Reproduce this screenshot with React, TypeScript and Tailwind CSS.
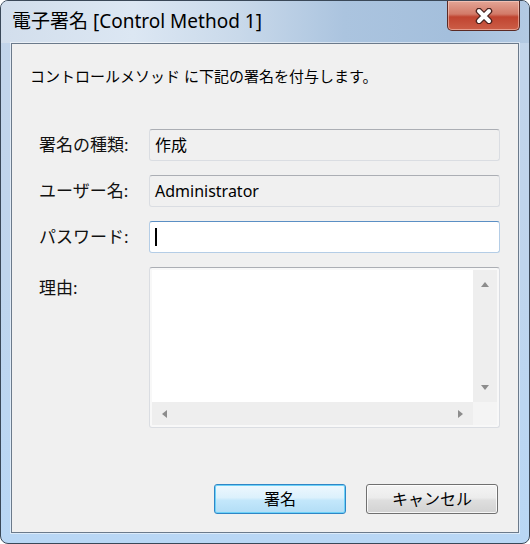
import React from "react"

const jp = "font-['Noto_Sans','Noto_Sans_CJK_JP',sans-serif]"

function CloseButton() {
  return (
    <button className="mr-[9px] flex h-[30px] w-[73px] items-center justify-center rounded-b-[5px] border border-t-0 border-[#5b2a24] bg-[linear-gradient(#e3a596_0%,#d27a68_45%,#c04430_55%,#cc5e47_100%)] shadow-[inset_0_0_0_1px_rgba(255,220,210,0.5)]">
      <svg width="22" height="16" viewBox="0 0 22 16">
        <path d="M6 3 L16 13 M16 3 L6 13" stroke="#4a2420" strokeWidth="6.5" strokeLinecap="round" />
        <path d="M6 3 L16 13 M16 3 L6 13" stroke="#ffffff" strokeWidth="4" strokeLinecap="round" />
      </svg>
    </button>
  )
}

function Arrow({ dir }: { dir: "up" | "down" | "left" | "right" }) {
  const pts = {
    up: "1,7 5,2 9,7",
    down: "1,3 5,8 9,3",
    left: "7,1 2,5 7,9",
    right: "3,1 8,5 3,9",
  }[dir]
  return (
    <svg width="10" height="10" viewBox="0 0 10 10">
      <polygon points={pts} fill="#8c8c8c" />
    </svg>
  )
}

function ReadonlyField({ value }: { value: string }) {
  return (
    <div className="flex h-[32px] flex-1 items-center rounded-[3px] border border-[#dadde2] border-t-[#abaeb4] bg-[#f0f0f0] px-[5px] text-[16px] text-black">
      {value}
    </div>
  )
}

function Row({ label, children, top }: { label: string; children: React.ReactNode; top?: boolean }) {
  return (
    <div className={`flex ${top ? "items-start" : "items-center"}`}>
      <div className={`w-[110px] text-[17px] text-[#111] ${top ? "mt-[8px]" : ""}`}>{label}</div>
      {children}
    </div>
  )
}

export default function App() {
  return (
    <div className={`${jp} h-[544px] w-[530px] bg-white`}>
      <div className="flex h-full w-full flex-col overflow-hidden rounded-[8px] border border-[#3a4858] bg-[linear-gradient(#c3d5ea_0%,#bfd5ed_50%,#b9d7f5_100%)]">
        <div className="flex h-[42px] items-start justify-between bg-[linear-gradient(90deg,#d2deec_0%,#dce7f3_25%,#c9d9ea_45%,#abc4df_65%,#a4bfdc_85%,#b3cae3_100%)]">
          <div className="pl-[11px] pt-[8px] text-[19px] leading-[24px] text-black">
            電子署名 [Control Method 1]
          </div>
          <CloseButton />
        </div>
        <div className="mx-[10px] mb-[10px] flex flex-1 flex-col border border-[#6b7a8b] bg-[#f0f0f0] shadow-[0_0_0_1px_rgba(255,255,255,0.5)]">
          <div className="ml-[18px] mt-[22px] text-[15px] leading-[20px] text-black">
            コントロールメソッド に下記の署名を付与します。
          </div>

          <div className="mt-[43px] flex flex-col gap-[14px] pl-[27px] pr-[18px]">
            <Row label="署名の種類:">
              <ReadonlyField value="作成" />
            </Row>
            <Row label="ユーザー名:">
              <ReadonlyField value="Administrator" />
            </Row>
            <Row label="パスワード:">
              <div className="flex h-[32px] flex-1 items-center rounded-[3px] border border-[#b4cde6] border-t-[#5b8fc4] bg-white px-[5px]">
                <div className="h-[18px] w-[2px] bg-black" />
              </div>
            </Row>
            <Row label="理由:" top>
              <div className="flex h-[161px] flex-1 flex-col rounded-[3px] border border-[#dadde2] border-t-[#abaeb4] bg-[#f8f8f8] p-[2px]">
                <div className="flex flex-1">
                  <div className="flex-1 bg-white" />
                  <div className="flex w-[24px] flex-col items-center justify-between bg-[#eeeeee] py-[10px]">
                    <Arrow dir="up" />
                    <Arrow dir="down" />
                  </div>
                </div>
                <div className="flex h-[23px]">
                  <div className="flex flex-1 items-center justify-between bg-[#eeeeee] px-[8px]">
                    <Arrow dir="left" />
                    <Arrow dir="right" />
                  </div>
                  <div className="w-[24px] bg-[#f4f4f4]" />
                </div>
              </div>
            </Row>
          </div>

          <div className="mt-[56px] flex justify-end gap-[20px] pr-[20px]">
            <button className="h-[30px] w-[132px] rounded-[3px] border border-[#2f86c6] bg-[linear-gradient(#eef8fe_0%,#dcf1fc_45%,#c3e7fb_55%,#b2ddf6_100%)] text-[16px] text-black shadow-[inset_0_0_0_1px_#6ed2f8]">
              署名
            </button>
            <button className="h-[30px] w-[132px] rounded-[3px] border border-[#707070] bg-[linear-gradient(#f4f4f4_0%,#ececec_45%,#dedede_55%,#d2d2d2_100%)] text-[16px] text-black shadow-[inset_0_0_0_1px_rgba(255,255,255,0.8)]">
              キャンセル
            </button>
          </div>
        </div>
      </div>
    </div>
  )
}
